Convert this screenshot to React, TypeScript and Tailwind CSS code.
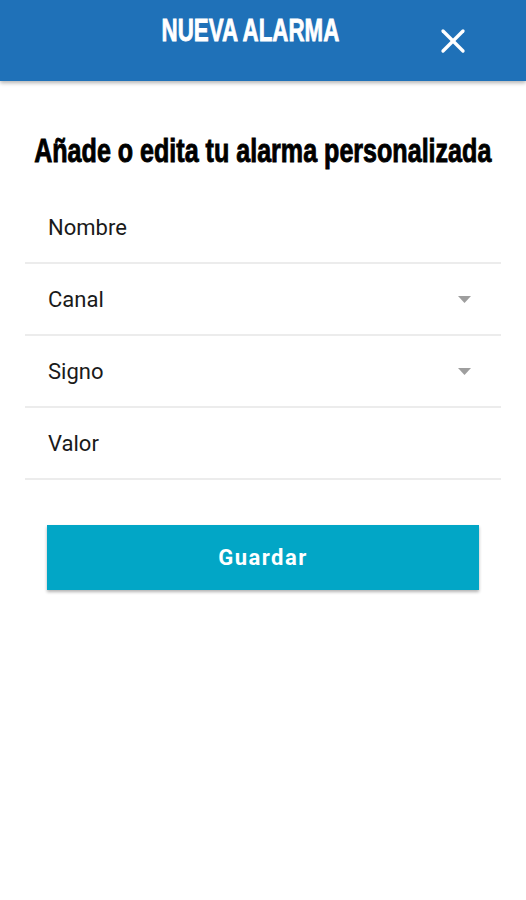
import { X } from 'lucide-react';

const impact = { fontFamily: '"Liberation Sans", Arial, sans-serif' };

const fields = [
  { label: 'Nombre', select: false },
  { label: 'Canal', select: true },
  { label: 'Signo', select: true },
  { label: 'Valor', select: false },
];

export default function App() {
  return (
    <div className="min-h-[900px] w-[526px] bg-white font-['Roboto',sans-serif]">
      {/* Header */}
      <header className="relative flex h-[81px] items-start bg-[#1f71b8] shadow-[0_2px_4px_rgba(0,0,0,0.3)]">
        <div className="flex w-[500px] justify-center pt-[13px]">
          <h1
            style={impact}
            className="inline-block scale-x-[0.72] whitespace-nowrap text-[31px] font-bold leading-[36px] text-white [-webkit-text-stroke:0.8px_white]"
          >
            NUEVA ALARMA
          </h1>
        </div>
        <button className="absolute left-[433px] top-[21px] text-white">
          <X size={40} strokeWidth={2} />
        </button>
      </header>

      <div className="mt-[52px] flex justify-center">
        <h2
          style={impact}
          className="inline-block scale-x-[0.76] whitespace-nowrap text-[33px] font-bold leading-[36px] text-black [-webkit-text-stroke:0.9px_black]"
        >
          Añade o edita tu alarma personalizada
        </h2>
      </div>

      <div className="mx-[25px] mt-[23px]">
        {fields.map((f) => (
          <div
            key={f.label}
            className="flex h-[72px] items-center justify-between border-b-2 border-[#ececec] pl-[23px] pr-[30px]"
          >
            <span className="text-[22px] text-[#1a1a1a]">{f.label}</span>
            {f.select && (
              <svg width="13" height="7" viewBox="0 0 13 7">
                <path d="M0 0h13L6.5 7z" fill="#9e9e9e" />
              </svg>
            )}
          </div>
        ))}

        <button className="mx-[22px] mt-[45px] flex h-[65px] w-[432px] items-center justify-center bg-[#02a6c6] text-[22px] font-bold tracking-[1.5px] text-white shadow-[0_2px_3px_rgba(0,0,0,0.3)]">
          Guardar
        </button>
      </div>
    </div>
  );
}
